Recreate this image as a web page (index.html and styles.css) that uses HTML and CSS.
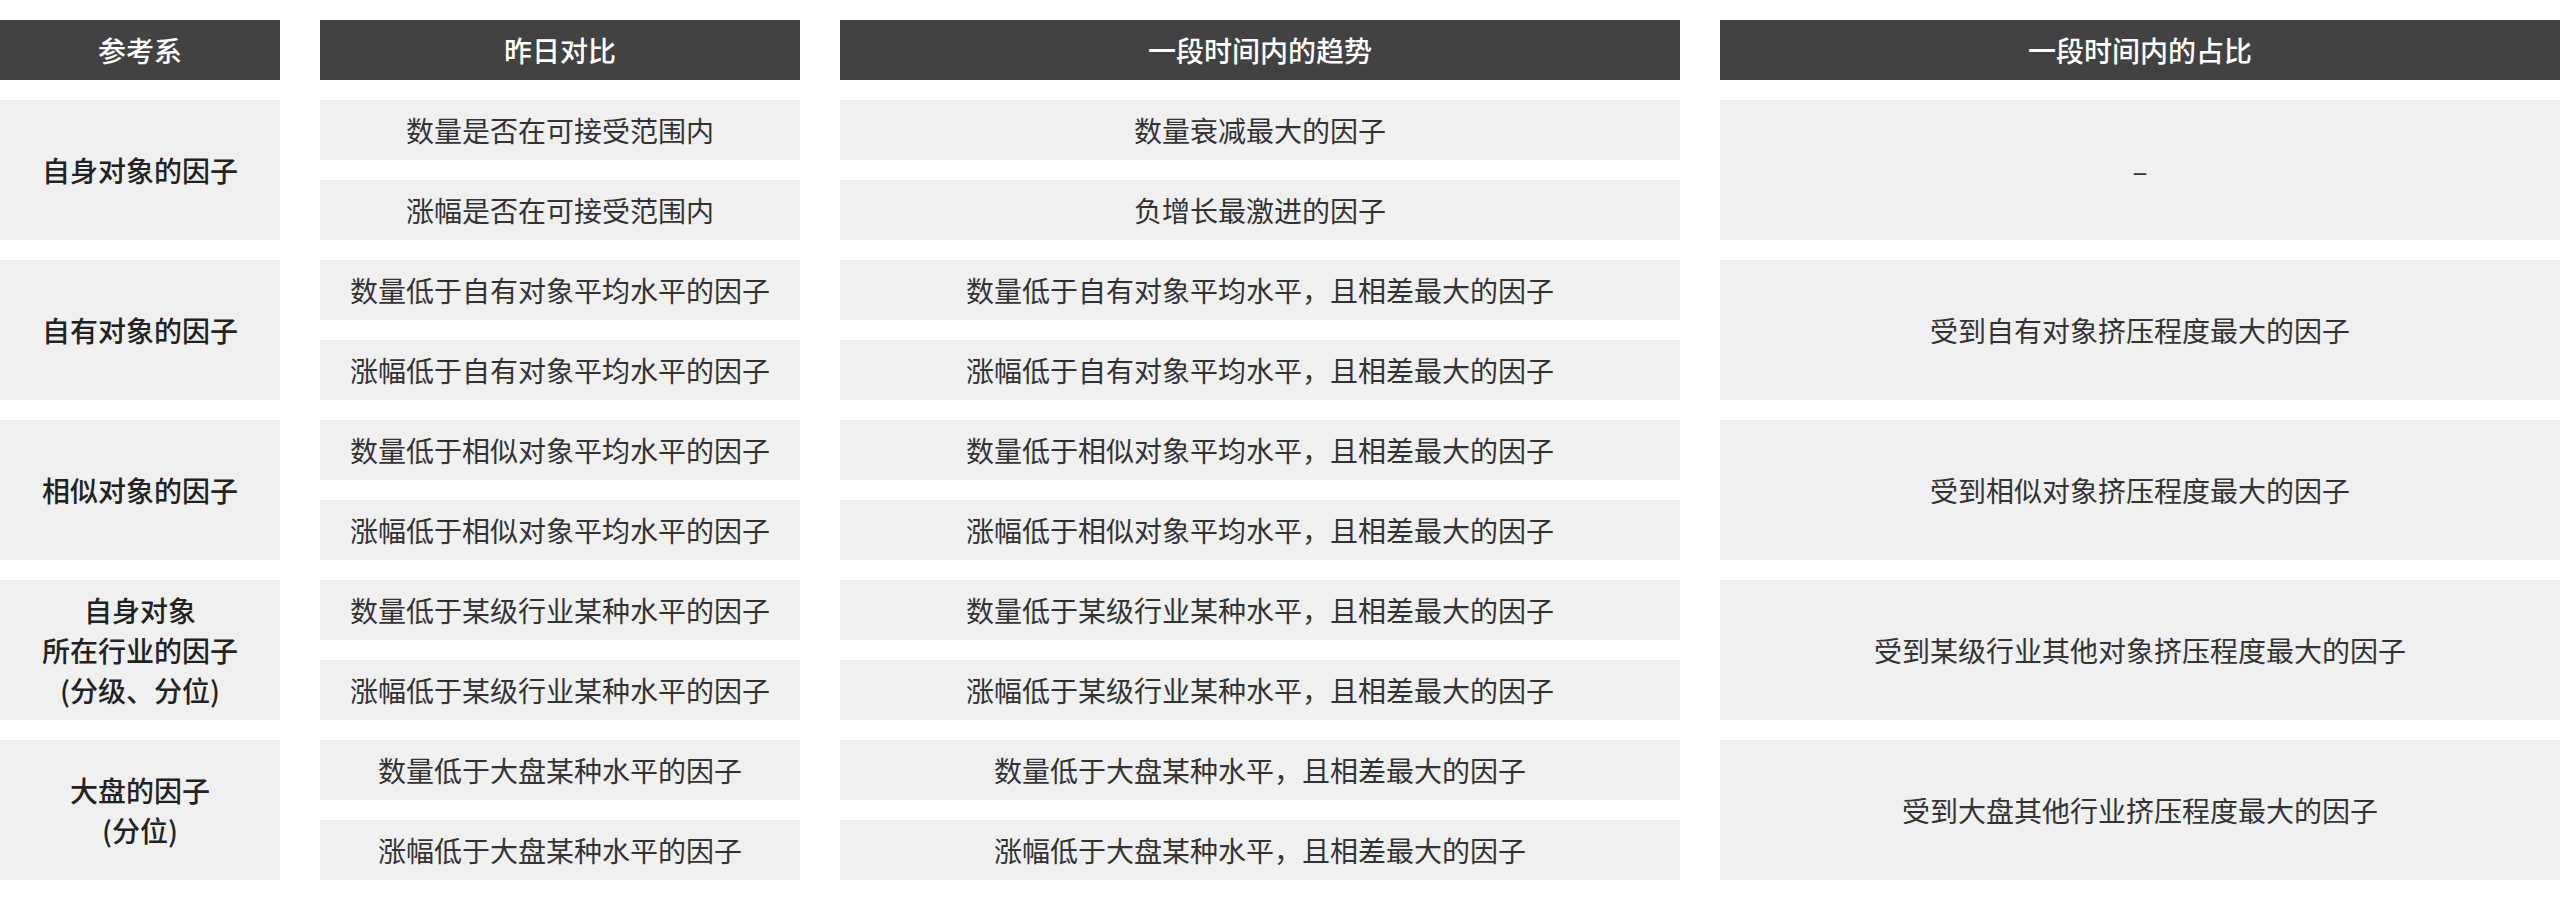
FILE: index.html
```html
<!DOCTYPE html>
<html lang="zh-CN">
<head>
<meta charset="utf-8">
<title>因子参考系</title>
<link rel="stylesheet" href="styles.css">
</head>
<body>
<div class="grid">
  <div class="head">参考系</div>
  <div class="head">昨日对比</div>
  <div class="head">一段时间内的趋势</div>
  <div class="head">一段时间内的占比</div>

  <div class="ref">自身对象的因子</div>
  <div class="cell">数量是否在可接受范围内</div>
  <div class="cell">数量衰减最大的因子</div>
  <div class="share">–</div>
  <div class="cell">涨幅是否在可接受范围内</div>
  <div class="cell">负增长最激进的因子</div>

  <div class="ref">自有对象的因子</div>
  <div class="cell">数量低于自有对象平均水平的因子</div>
  <div class="cell">数量低于自有对象平均水平，且相差最大的因子</div>
  <div class="share">受到自有对象挤压程度最大的因子</div>
  <div class="cell">涨幅低于自有对象平均水平的因子</div>
  <div class="cell">涨幅低于自有对象平均水平，且相差最大的因子</div>

  <div class="ref">相似对象的因子</div>
  <div class="cell">数量低于相似对象平均水平的因子</div>
  <div class="cell">数量低于相似对象平均水平，且相差最大的因子</div>
  <div class="share">受到相似对象挤压程度最大的因子</div>
  <div class="cell">涨幅低于相似对象平均水平的因子</div>
  <div class="cell">涨幅低于相似对象平均水平，且相差最大的因子</div>

  <div class="ref">自身对象<br>所在行业的因子<br>(分级、分位)</div>
  <div class="cell">数量低于某级行业某种水平的因子</div>
  <div class="cell">数量低于某级行业某种水平，且相差最大的因子</div>
  <div class="share">受到某级行业其他对象挤压程度最大的因子</div>
  <div class="cell">涨幅低于某级行业某种水平的因子</div>
  <div class="cell">涨幅低于某级行业某种水平，且相差最大的因子</div>

  <div class="ref">大盘的因子<br>(分位)</div>
  <div class="cell">数量低于大盘某种水平的因子</div>
  <div class="cell">数量低于大盘某种水平，且相差最大的因子</div>
  <div class="share">受到大盘其他行业挤压程度最大的因子</div>
  <div class="cell">涨幅低于大盘某种水平的因子</div>
  <div class="cell">涨幅低于大盘某种水平，且相差最大的因子</div>
</div>
</body>
</html>
```

FILE: styles.css
```css
html, body {
  margin: 0;
  padding: 0;
  background: #ffffff;
}

body {
  font-family: "Noto Sans CJK SC", "Noto Sans", sans-serif;
  font-size: 28px;
  color: #333333;
}

.grid {
  display: grid;
  grid-template-columns: 280px 480px 840px 840px;
  grid-auto-rows: 60px;
  column-gap: 40px;
  row-gap: 20px;
  padding-top: 20px;
}

.head,
.cell,
.ref,
.share {
  display: flex;
  align-items: center;
  justify-content: center;
  text-align: center;
  line-height: 40px;
}

.head {
  background: #424242;
  color: #ffffff;
  font-weight: 500;
}

.cell {
  background: #f0f0f0;
}

.ref {
  background: #f0f0f0;
  grid-row: span 2;
  font-weight: 500;
  color: #222222;
}

.share {
  background: #f0f0f0;
  grid-row: span 2;
}
```
